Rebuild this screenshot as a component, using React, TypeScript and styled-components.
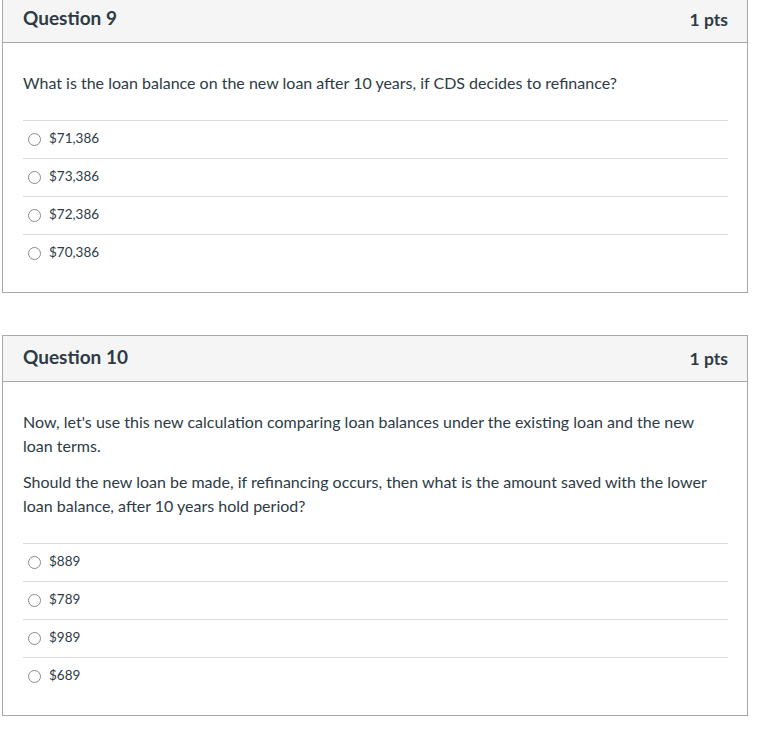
import styled, { createGlobalStyle } from 'styled-components';

const GlobalStyle = createGlobalStyle`
  body {
    margin: 0;
    background: #fff;
    font-family: Lato, "Open Sans", sans-serif;
    color: #2d3b45;
  }
`;

const Page = styled.div`
  display: flex;
  flex-direction: column;
  gap: 42px;
  width: 746px;
  margin: -4px 0 0 2px;
`;

const Card = styled.div`
  border: 1px solid #a8a8a8;
  background: #fff;
`;

const Header = styled.div`
  display: flex;
  align-items: center;
  justify-content: space-between;
  height: 45px;
  padding: 0 19px 0 20px;
  background: #f5f5f5;
  border-bottom: 1px solid #a8a8a8;
`;

const Title = styled.div`
  padding-bottom: 5px;
  font-size: 19px;
  font-weight: 700;
  color: #2d3b45;
`;

const Points = styled.div`
  font-size: 17.5px;
  font-weight: 700;
  color: #2d3b45;
`;

const Body = styled.div`
  padding: 28px 19px 20px 20px;
`;

const Text = styled.p`
  margin: 0 0 12px;
  padding-right: 12px;
  font-size: 16px;
  line-height: 24px;
  &:last-of-type {
    margin-bottom: 0;
  }
`;

const Answers = styled.div`
  display: flex;
  flex-direction: column;
  margin-top: 25px;
`;

const Answer = styled.label`
  display: flex;
  align-items: center;
  gap: 8px;
  height: 34px;
  padding: 0 0 3px 5px;
  border-top: 1px solid #dcdcdc;
  font-size: 13.5px;
  color: #2d3b45;
`;

const Radio = styled.span`
  width: 11px;
  height: 11px;
  margin-top: 2px;
  border: 1px solid #8a8a8a;
  border-radius: 50%;
  background: #fff;
  flex: none;
`;

type Question = {
  title: string;
  points: string;
  text: string[];
  answers: string[];
};

const questions: Question[] = [
  {
    title: 'Question 9',
    points: '1 pts',
    text: [
      'What is the loan balance on the new loan after 10 years, if CDS decides to refinance?',
    ],
    answers: ['$71,386', '$73,386', '$72,386', '$70,386'],
  },
  {
    title: 'Question 10',
    points: '1 pts',
    text: [
      "Now, let's use this new calculation comparing loan balances under the existing loan and the new loan terms.",
      'Should the new loan be made, if refinancing occurs, then what is the amount saved with the lower loan balance, after 10 years hold period?',
    ],
    answers: ['$889', '$789', '$989', '$689'],
  },
];

export default function App() {
  return (
    <>
      <GlobalStyle />
      <Page>
        {questions.map((q) => (
          <Card key={q.title}>
            <Header>
              <Title>{q.title}</Title>
              <Points>{q.points}</Points>
            </Header>
            <Body>
              {q.text.map((t) => (
                <Text key={t}>{t}</Text>
              ))}
              <Answers>
                {q.answers.map((a) => (
                  <Answer key={a}>
                    <Radio />
                    {a}
                  </Answer>
                ))}
              </Answers>
            </Body>
          </Card>
        ))}
      </Page>
    </>
  );
}
